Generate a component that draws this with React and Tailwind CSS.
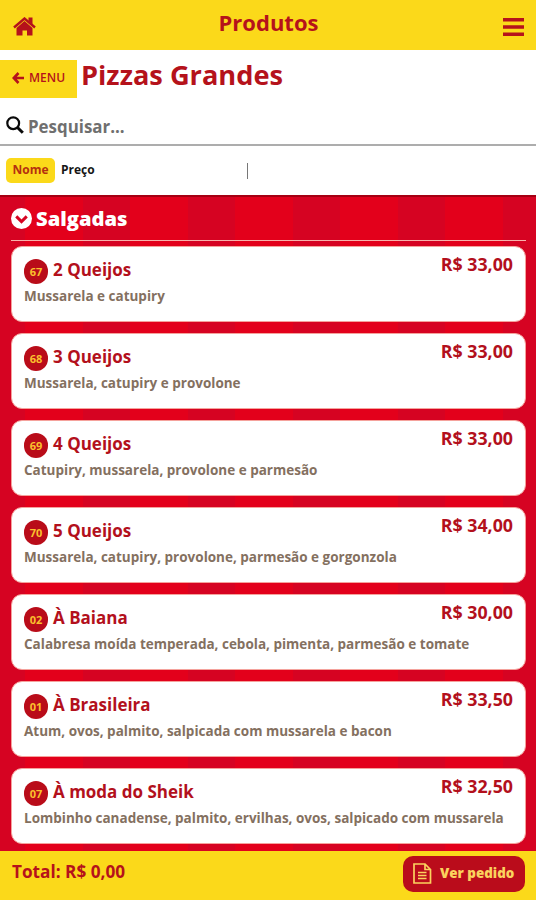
import React from 'react';

const products = [
  { code: '67', name: '2 Queijos', description: 'Mussarela e catupiry', price: '33,00' },
  { code: '68', name: '3 Queijos', description: 'Mussarela, catupiry e provolone', price: '33,00' },
  { code: '69', name: '4 Queijos', description: 'Catupiry, mussarela, provolone e parmesão', price: '33,00' },
  { code: '70', name: '5 Queijos', description: 'Mussarela, catupiry, provolone, parmesão e gorgonzola', price: '34,00' },
  { code: '02', name: 'À Baiana', description: 'Calabresa moída temperada, cebola, pimenta, parmesão e tomate', price: '30,00' },
  { code: '01', name: 'À Brasileira', description: 'Atum, ovos, palmito, salpicada com mussarela e bacon', price: '33,50' },
  { code: '07', name: 'À moda do Sheik', description: 'Lombinho canadense, palmito, ervilhas, ovos, salpicado com mussarela', price: '32,50' },
];

const ProductCard = ({ product }) => (
  <div className="h-[76px] shrink-0 rounded-[11px] border border-[#f5a29c] bg-white px-3 flex flex-col">
    <div className="flex items-start justify-between h-[37px]">
      <div className="flex items-start">
        <span className="mt-[12px] w-[24px] h-[25px] rounded-full bg-[#b90c19] text-[#fbc02d] text-[11px] leading-[26px] font-bold text-center">
          {product.code}
        </span>
        <span className="mt-[10px] ml-[5px] text-[17px] leading-[26px] font-bold text-[#b3101c]">{product.name}</span>
      </div>
      <span className="mt-[4px] text-[17.8px] leading-[26px] font-bold text-[#b3101c]">R$ {product.price}</span>
    </div>
    <p className="mt-[2px] text-[13.5px] leading-[20px] font-bold text-[#84705f] whitespace-nowrap">{product.description}</p>
  </div>
);

const App = () => {
  return (
    <div className="w-[536px] h-[900px] overflow-hidden flex flex-col bg-white font-['Open_Sans','Noto_Sans',sans-serif] font-bold">
      {/* Barra superior */}
      <header className="h-[50px] shrink-0 bg-[#fbd91a] flex items-center justify-between pl-[13px] pr-[12px] text-[#b5121b]">
        <svg className="w-[23px] h-[19px] mt-[3px]" viewBox="0 0 23 19">
          <path d="M1 10.5L11.5 1.5 22 10.500" fill="none" stroke="currentColor" strokeWidth="2.4" />
          <path d="M15.500 0.500h4v7L15.500 4zM11.500 4L19.500 11V18.500H14v-5H9.500v5H3.500V11z" fill="currentColor" />
        </svg>
        <h1 className="text-[22px] leading-[30px] -mt-[6px] -ml-[2px]">Produtos</h1>
        <svg className="w-[21px] h-[20px] mt-[3px]" viewBox="0 0 21 20" fill="currentColor">
          <path d="M0 1h21v3.500H0zM0 8.300h21v3.500H0zM0 15.500h21V19H0z" />
        </svg>
      </header>

      {/* Título da categoria */}
      <div className="h-[52px] shrink-0 flex items-start pt-[10px] text-[#b5121b]">
        <button className="w-[77px] h-[38px] bg-[#fbd91a] flex items-center pl-[12px] pb-[3px] text-[12px] font-semibold">
          <svg className="w-[12px] h-[12px] mr-[5px]" viewBox="0 0 12 12" fill="none" stroke="currentColor" strokeWidth="2.6">
            <path d="M6.500 1L1.800 6l4.700 5M1.800 6H12" />
          </svg>
          MENU
        </button>
        <h2 className="ml-[4px] text-[27.2px] leading-[32px] -mt-px">Pizzas Grandes</h2>
      </div>

      {/* Busca */}
      <div className="h-[44px] shrink-0 border-b-2 border-[#adadad] flex items-center pl-[6px] text-[#6f6f6f]">
        <svg className="w-[18px] h-[18px] mr-[4px] mt-[3px]" viewBox="0 0 18 18" fill="none" stroke="#0a0a0a">
          <circle cx="7.2" cy="7.2" r="5.9" strokeWidth="2.2" />
          <path d="M11.500 11.500L16.800 16.800" strokeWidth="3" />
        </svg>
        <span className="text-[16.9px] leading-[26px] mt-[8px]">Pesquisar...</span>
      </div>

      {/* Ordenação */}
      <div className="h-[49px] shrink-0 flex items-center pl-[6px] text-[12px] text-[#161616]">
        <span className="w-[49px] h-[25px] rounded-[5px] bg-[#fbd91a] text-[#b5300f] leading-[23px] text-center">Nome</span>
        <span className="ml-[6px] -mt-[2px]">Preço</span>
        <span className="ml-[152px] w-px h-[16px] bg-[#777]" />
      </div>

      <main className="h-[656px] shrink-0 border-t-2 border-[#a50013] pl-[11px] pr-[10px] flex flex-col overflow-hidden bg-[repeating-linear-gradient(90deg,#d60322_0px,#d60322_25px,#e3001b_25px,#e3001b_83px,#d60322_83px,#d60322_105px)]">
        <div className="h-[44px] shrink-0 border-b border-[#f9b0aa] flex items-center text-white">
          <svg className="w-[21px] h-[21px] mr-[4px]" viewBox="0 0 20 20">
            <circle cx="10" cy="10" r="10" fill="#fff" />
            <path d="M5 8l5 5 5-5" fill="none" stroke="#d60322" strokeWidth="2.8" />
          </svg>
          <h3 className="text-[20.2px] leading-[28px] -mt-px font-extrabold">Salgadas</h3>
        </div>
        <div className="mt-[5px] flex flex-col gap-[11px]">
          {products.map((product) => (
            <ProductCard key={product.code} product={product} />
          ))}
        </div>
      </main>

      {/* Rodapé */}
      <footer className="grow bg-[#fbd91a] flex items-start justify-between pl-[12px] pr-[11px] pt-[5px] text-[#b5121b]">
        <span className="mt-[3px] text-[17.2px] leading-[26px]">Total: R$ 0,00</span>
        <button className="w-[122px] h-[36px] rounded-[10px] bg-[#ba0c1b] text-[#fbd25e] flex items-center pl-[10px] pb-px text-[13.4px] font-extrabold whitespace-nowrap">
          <svg className="w-[19px] h-[21px] mr-[8px]" viewBox="0 0 19 21" fill="none" stroke="currentColor" strokeWidth="1.7">
            <path d="M1 1h11l5.500 5.500V20H1zM12 1v5.500h5.500M5 9.500h8.500M5 12.500h8.500M5 15.500h8.500" />
          </svg>
          Ver pedido
        </button>
      </footer>
    </div>
  );
};

export default App;
